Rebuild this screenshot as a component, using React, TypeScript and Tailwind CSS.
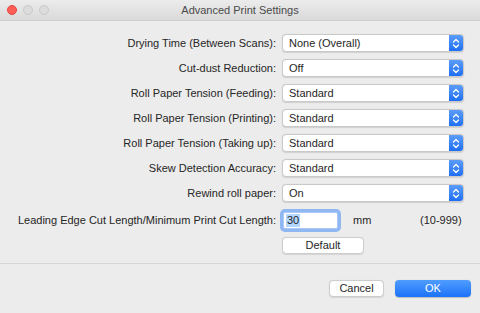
import type { ReactNode } from "react";

const popups = [
  { label: "Drying Time (Between Scans):", value: "None (Overall)" },
  { label: "Cut-dust Reduction:", value: "Off" },
  { label: "Roll Paper Tension (Feeding):", value: "Standard" },
  { label: "Roll Paper Tension (Printing):", value: "Standard" },
  { label: "Roll Paper Tension (Taking up):", value: "Standard" },
  { label: "Skew Detection Accuracy:", value: "Standard" },
  { label: "Rewind roll paper:", value: "On" },
];

function Stepper() {
  return (
    <svg width="8" height="11" viewBox="0 0 8 11" fill="none">
      <path d="M1.5 4 L4 1.5 L6.5 4" stroke="white" strokeWidth="1.3" strokeLinecap="round" strokeLinejoin="round" />
      <path d="M1.5 7 L4 9.5 L6.5 7" stroke="white" strokeWidth="1.3" strokeLinecap="round" strokeLinejoin="round" />
    </svg>
  );
}

function Popup({ value }: { value: string }) {
  return (
    <div className="flex h-[18px] w-[182px] items-stretch overflow-hidden rounded-[4px] border border-[#c9c9c9] bg-white shadow-[0_0.5px_1px_rgba(0,0,0,0.12)]">
      <span className="flex flex-1 items-center pl-[6px] text-[#262626]">{value}</span>
      <span className="flex w-[14px] items-center justify-center bg-gradient-to-b from-[#5b9cf9] to-[#1e6ff4]">
        <Stepper />
      </span>
    </div>
  );
}

function Button({ children, primary, width }: { children: ReactNode; primary?: boolean; width: string }) {
  return (
    <button
      className={
        primary
          ? `flex h-[17px] ${width} items-center justify-center rounded-[4px] bg-gradient-to-b from-[#4f9cff] to-[#1a72f8] text-white shadow-[0_0.5px_1px_rgba(0,0,0,0.2)]`
          : `flex h-[17px] ${width} items-center justify-center rounded-[4px] border border-[#cdcdcd] bg-white text-[#262626] shadow-[0_0.5px_1px_rgba(0,0,0,0.1)]`
      }
    >
      {children}
    </button>
  );
}

export default function App() {
  return (
    <div className="flex h-[313px] w-[480px] flex-col bg-[#ececec] font-['Liberation_Sans',sans-serif] text-[11px] text-[#262626]">
      <header className="flex h-[21px] items-center border-b border-[#cfcfcf] bg-gradient-to-b from-[#ececec] to-[#dadada]">
        <div className="flex w-[60px] items-center gap-[6px] pl-[7px]">
          <span className="h-[10px] w-[10px] rounded-full border border-[#e2463f] bg-[#fd5f57]" />
          <span className="h-[10px] w-[10px] rounded-full border border-[#c9c9c9] bg-[#dcdcdc]" />
          <span className="h-[10px] w-[10px] rounded-full border border-[#c9c9c9] bg-[#dcdcdc]" />
        </div>
        <h1 className="flex-1 text-center text-[11px] text-[#4a4a4a]">Advanced Print Settings</h1>
        <div className="w-[60px]" />
      </header>

      <main className="flex flex-col gap-[7px] pt-[13px]">
        {popups.map((p) => (
          <div className="flex h-[18px] items-center" key={p.label}>
            <span className="w-[276px] text-right">{p.label}</span>
            <span className="ml-[6px]">
              <Popup value={p.value} />
            </span>
          </div>
        ))}

        <div className="mt-[1px] flex h-[20px] items-center">
          <span className="w-[276px] text-right">Leading Edge Cut Length/Minimum Print Cut Length:</span>
          <div className="ml-[7px] flex h-[17px] w-[55px] items-center rounded-[2px] border border-[#a9c8f5] bg-white pl-[2px] ring-[3px] ring-[#8fb8f2]">
            <span className="bg-[#b3d7ff] px-[1px] leading-[13px]">30</span>
          </div>
          <span className="ml-[15px] w-[67px]">mm</span>
          <span>(10-999)</span>
        </div>

        <div className="flex pl-[282px]">
          <Button width="w-[82px]">Default</Button>
        </div>
      </main>

      <div className="mt-[9px] h-px bg-[#d6d6d6]" />

      <footer className="flex justify-end gap-[11px] pr-[9px] pt-[16px]">
        <Button width="w-[55px]">Cancel</Button>
        <Button primary width="w-[76px]">OK</Button>
      </footer>
    </div>
  );
}
